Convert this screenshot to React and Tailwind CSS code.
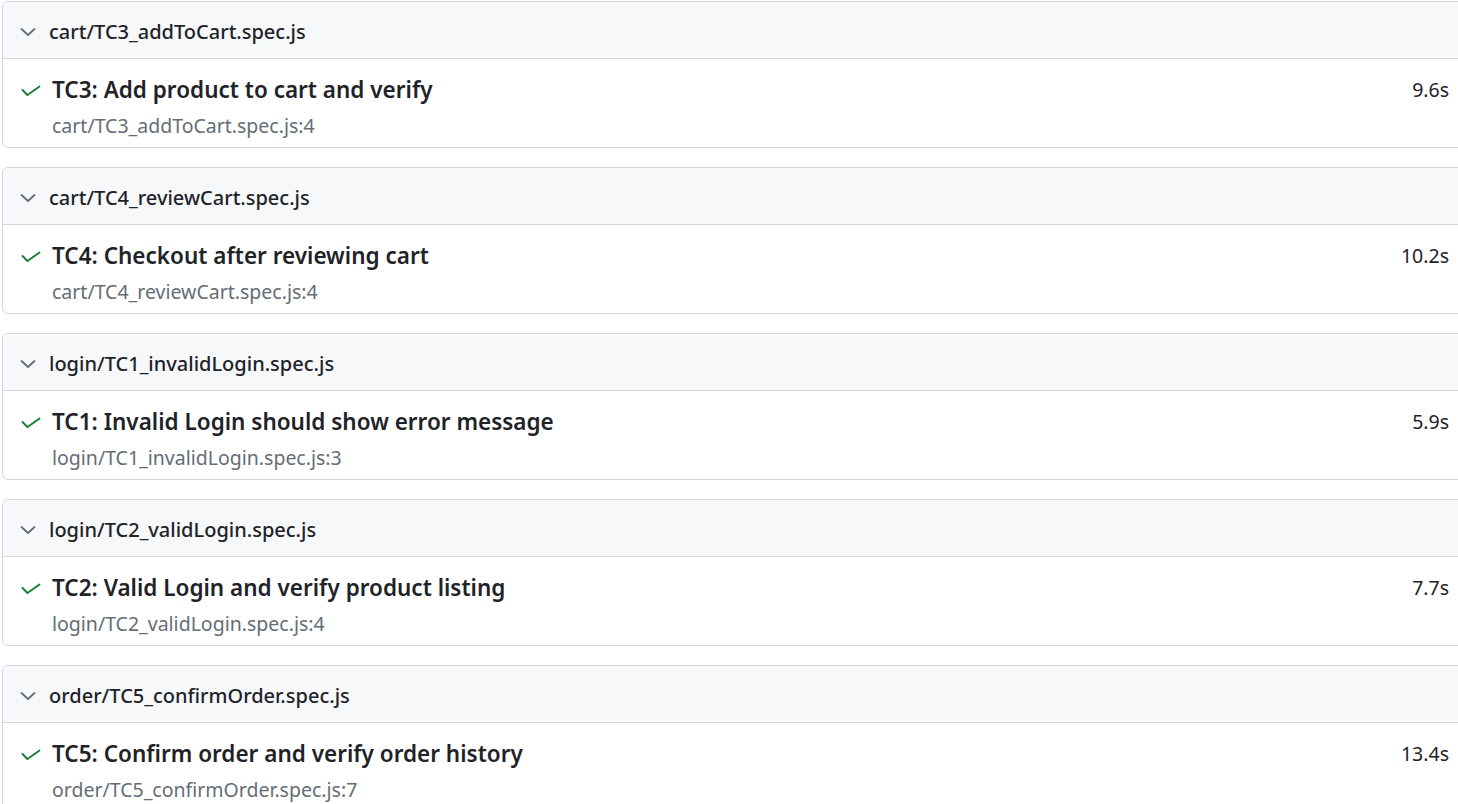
const files = [
    { file: 'cart/TC3_addToCart.spec.js', title: 'TC3: Add product to cart and verify', line: 4, time: '9.6s' },
    { file: 'cart/TC4_reviewCart.spec.js', title: 'TC4: Checkout after reviewing cart', line: 4, time: '10.2s' },
    { file: 'login/TC1_invalidLogin.spec.js', title: 'TC1: Invalid Login should show error message', line: 3, time: '5.9s' },
    { file: 'login/TC2_validLogin.spec.js', title: 'TC2: Valid Login and verify product listing', line: 4, time: '7.7s' },
    { file: 'order/TC5_confirmOrder.spec.js', title: 'TC5: Confirm order and verify order history', line: 7, time: '13.4s' },
];

function Chevron() {
    return (
        <svg width="16" height="10" viewBox="0 0 16 10" fill="none" className="shrink-0">
            <polyline points="1.5,2 8,8 14.5,2" stroke="#656d76" strokeWidth="1.8" strokeLinecap="round" strokeLinejoin="round" />
        </svg>
    );
}

function Tick() {
    return (
        <svg width="20" height="12" viewBox="0 0 20 12" fill="none" className="shrink-0">
            <polyline points="1.5,5 6.5,10 18.5,1.5" stroke="#1a7f37" strokeWidth="2" strokeLinecap="round" strokeLinejoin="round" />
        </svg>
    );
}

function FileChip({ file, title, line, time }) {
    return (
        <div className="border border-[#d0d7de] rounded-md bg-white overflow-hidden">
            <div className="h-[57px] flex items-center bg-[#f6f8fa] border-b border-[#d0d7de] pl-[17px] pt-[3px]">
                <Chevron />
                <span className="ml-[13px] text-[20px] font-medium text-[#1f2328]">{file}</span>
            </div>
            <div className="h-[88px] flex pl-[18px] pr-[17px] pt-[15px]">
                <div className="pt-[11px]">
                    <Tick />
                </div>
                <div className="ml-[11px] flex-1">
                    <div className="text-[22.5px] font-semibold text-[#1f2328] leading-[32px]">{title}</div>
                    <div className="text-[19.5px] text-[#656d76] leading-[28px] mt-[6px]">{file}:{line}</div>
                </div>
                <div className="text-[19.5px] text-[#1f2328] leading-[32px]">{time}</div>
            </div>
        </div>
    );
}

export default function App() {
    return (
        <div className="w-[1458px] h-[804px] overflow-hidden bg-white" style={{ fontFamily: '"Noto Sans", "Open Sans", sans-serif' }}>
            <div className="w-[1465px] ml-[2px] mt-[1px] flex flex-col gap-[19px]">
                {files.map((f) => (
                    <FileChip key={f.file} {...f} />
                ))}
            </div>
        </div>
    );
}
